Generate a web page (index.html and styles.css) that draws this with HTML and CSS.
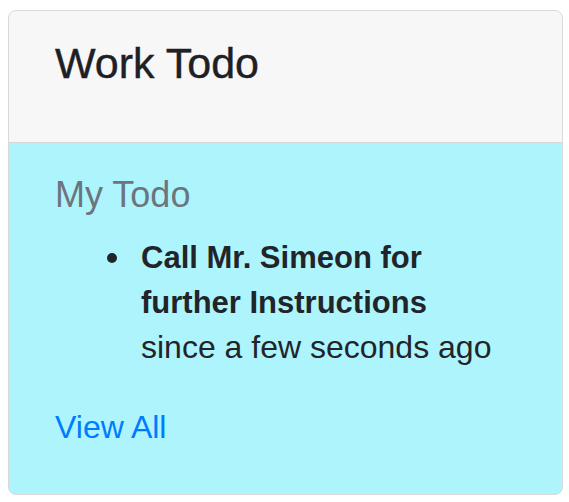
FILE: index.html
```html
<!DOCTYPE html>
<html lang="en">
<head>
<meta charset="utf-8">
<title>Work Todo</title>
<link rel="stylesheet" href="styles.css">
</head>
<body>
<div class="card">
  <div class="card-header">
    <h3 class="card-title">Work Todo</h3>
  </div>
  <div class="card-body">
    <h6 class="card-subtitle">My Todo</h6>
    <ul class="todo-list">
      <li class="todo-item"><strong>Call Mr. Simeon for further Instructions</strong><span class="since">since a few seconds ago</span></li>
    </ul>
    <a class="card-link" href="#">View All</a>
  </div>
</div>
</body>
</html>
```
FILE: styles.css
```css
* { box-sizing: border-box; }
body {
  margin: 10px 6px 8px 8px;
  font-family: "Liberation Sans", Arial, sans-serif;
  color: #212529;
  background: #fff;
}
.card {
  border: 1px solid #d9d9d9;
  border-radius: 8px;
  overflow: hidden;
  background: #aef4fd;
}
.card-header {
  background: #f7f7f7;
  border-bottom: 1px solid #d6d6d6;
  padding: 27px 46px 54px;
}
.card-title {
  margin: 0;
  font-size: 43px;
  line-height: 50px;
  font-weight: normal;
  color: #1d2125;
  -webkit-text-stroke: 0.4px #1d2125;
}
.card-body {
  padding: 31px 46px 44px;
}
.card-subtitle {
  margin: 0;
  font-size: 36px;
  line-height: 42px;
  font-weight: normal;
  color: #6c757d;
}
.todo-list {
  list-style: none;
  margin: 19px 0 35px;
  padding-left: 86px;
  font-size: 32px;
  line-height: 45px;
}
.todo-item { position: relative; }
.todo-item::before {
  content: "";
  position: absolute;
  left: -34px;
  top: 18px;
  width: 10px;
  height: 10px;
  border-radius: 50%;
  background: #212529;
}
.todo-list strong { font-weight: bold; font-size: 31px; }
.since { display: block; }
.card-link {
  display: block;
  font-size: 32px;
  line-height: 45px;
  color: #007bff;
  text-decoration: none;
}
```
